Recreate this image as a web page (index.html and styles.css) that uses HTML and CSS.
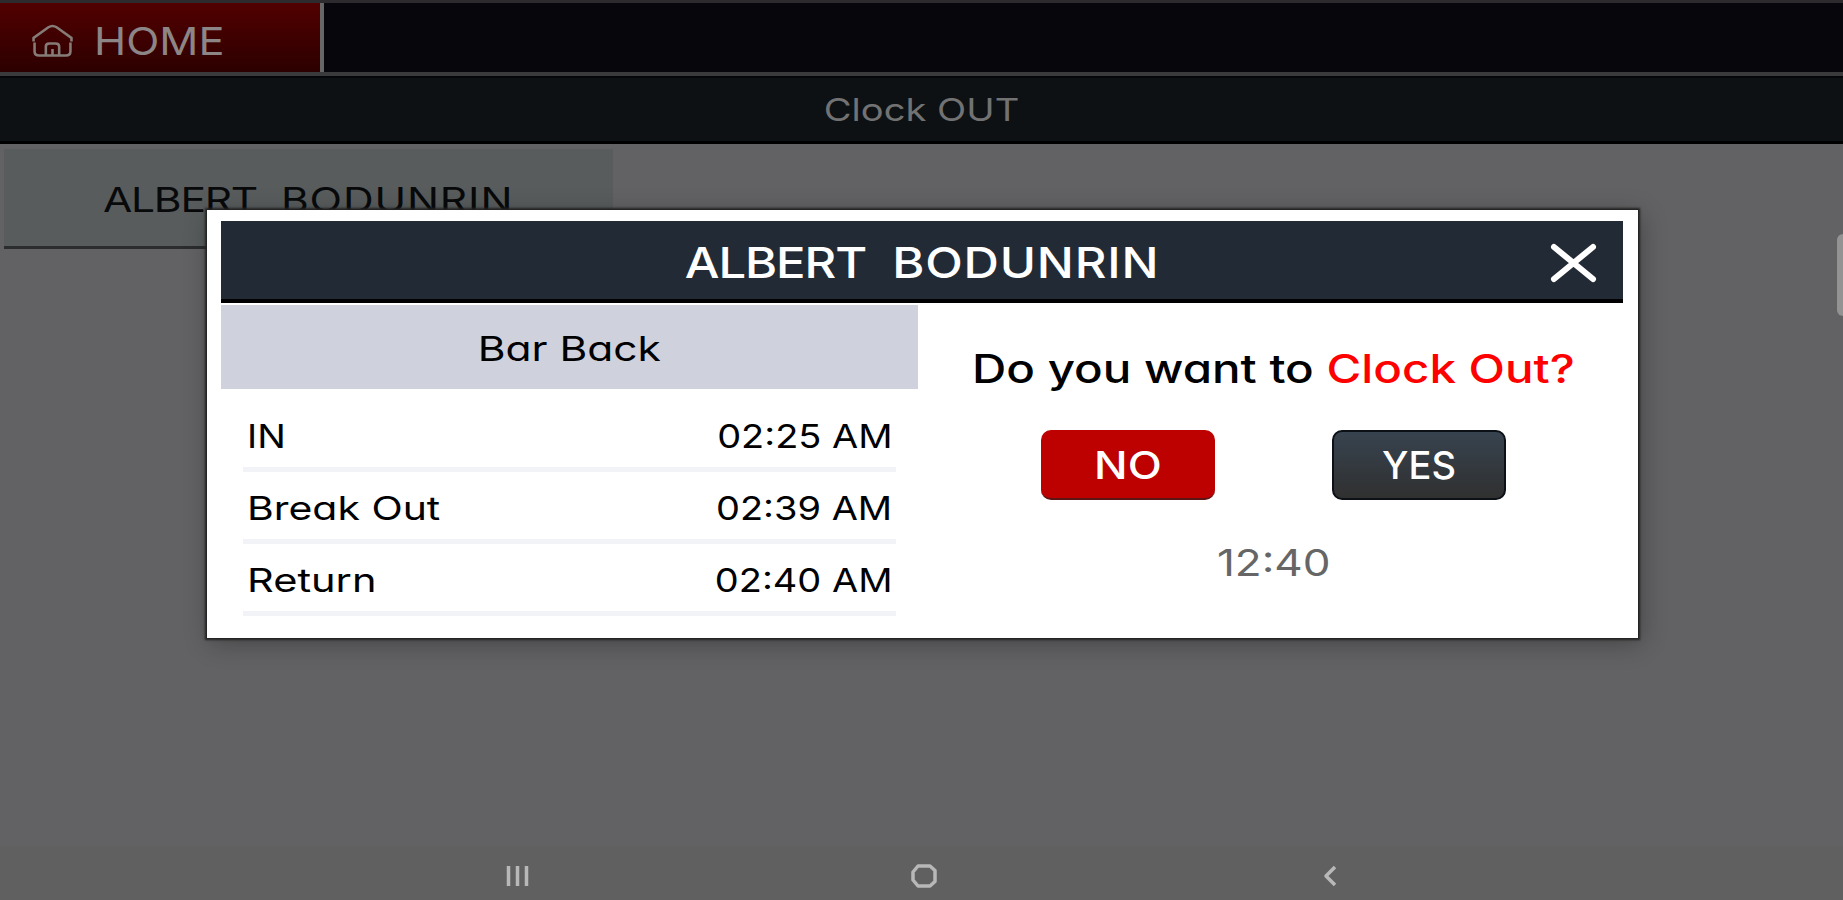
FILE: index.html
```html
<!DOCTYPE html>
<html lang="en">
<head>
    <meta charset="UTF-8">
    <meta name="viewport" content="width=device-width, initial-scale=1.0">
    <title>Clock OUT</title>
    <link rel="stylesheet" href="styles.css">
</head>
<body>
    <div class="screen">
        <header class="topbar">
            <a class="home-button">
                <svg class="home-icon" viewBox="0 0 40 33" preserveAspectRatio="none">
                    <path d="M1.5 17.500V14L16 3.2Q20 .6 24 3.2L38.500 14V17.500M2.500 18.500V27.500Q2.500 31.500 7 31.500H33Q37.500 31.500 37.500 27.500V18.500M13.500 31V22.500Q13.500 19.500 17 19.500H23Q26.500 19.500 26.500 22.500V31M20 25V31"/>
                </svg>
                <span class="text home-label">HOME</span>
            </a>
        </header>

        <div class="title-bar"><span class="text page-title">Clock OUT</span></div>

        <main class="employees">
            <div class="employee-card"><span class="text employee-name"><span class="first">ALBERT</span>&nbsp; <span class="last">BODUNRIN</span></span></div>
        </main>

        <nav class="android-nav">
            <svg class="nav-icon" viewBox="0 0 30 24">
                <path d="M5.500 2V22M14.500 2V22M23.500 2V22"/>
            </svg>
            <svg class="nav-icon" viewBox="0 0 30 24">
                <path d="M9 2H21L26 6.500V17.500L21 22H9L4 16V8Z"/>
            </svg>
            <svg class="nav-icon" viewBox="0 0 30 24">
                <path d="M20 3L11 12L20 21"/>
            </svg>
        </nav>
    </div>

    <div class="edge-handle"></div>

    <!-- Clock out dialog -->
    <div class="modal">
        <div class="modal-header">
            <span class="text modal-title"><span class="first">ALBERT</span>&nbsp; <span class="last">BODUNRIN</span></span>
            <svg class="close-icon" viewBox="0 0 50 42">
                <path d="M5 5L44 37M44 5L5 37"/>
            </svg>
        </div>
        <div class="modal-body">
            <section class="shift">
                <div class="job"><span class="text job-name">Bar Back</span></div>
                <ul class="punches">
                    <li><span class="text label in">IN</span><span class="text time">02:25 AM</span></li>
                    <li><span class="text label break">Break Out</span><span class="text time">02:39 AM</span></li>
                    <li><span class="text label return">Return</span><span class="text time">02:40 AM</span></li>
                </ul>
            </section>
            <section class="confirm">
                <p class="text question">Do you want to <span class="red">Clock Out?</span></p>
                <div class="buttons">
                    <button class="btn btn-no"><span class="text no">NO</span></button>
                    <button class="btn btn-yes"><span class="text yes">YES</span></button>
                </div>
                <span class="text clock">12:40</span>
            </section>
        </div>
    </div>
</body>
</html>
```
FILE: styles.css
```css
* {
    box-sizing: border-box;
}

body {
    margin: 0;
    font-family: Inter, "Liberation Sans", sans-serif;
    font-feature-settings: "cv11";
    background-color: #626264;
    height: 900px;
    overflow: hidden;
    position: relative;
}

.text {
    display: inline-block;
    white-space: nowrap;
    line-height: 1;
}

.first {
    letter-spacing: -1px;
}

.last {
    letter-spacing: 0.7px;
}

.screen {
    display: flex;
    flex-direction: column;
    height: 900px;
}

.topbar {
    display: flex;
    height: 76px;
    background-color: #07060c;
    border-top: 3px solid #2d2b2e;
    border-bottom: 4px solid #3a393c;
}

.home-button {
    display: flex;
    align-items: center;
    width: 324px;
    padding-left: 32px;
    padding-top: 6px;
    border-right: 4px solid #666;
    background: linear-gradient(#520000, #2c0000);
    color: #8c8686;
}

.home-icon {
    width: 41px;
    height: 33px;
    margin-right: 21px;
    fill: none;
    stroke: #857c78;
    stroke-width: 2.5;
}

.home-label {
    font-size: 38px;
    transform: scaleX(1.14);
    transform-origin: left;
}

.title-bar {
    display: flex;
    align-items: center;
    justify-content: center;
    height: 68px;
    background-color: #0d1113;
    border-top: 2px solid #04060a;
    border-bottom: 3px solid #000;
    color: #727273;
}

.page-title {
    font-size: 31px;
    transform: scaleX(1.23);
}

.employees {
    flex: 1;
    padding: 5px 4px;
}

.employee-card {
    display: flex;
    align-items: center;
    justify-content: center;
    width: 609px;
    height: 100px;
    padding-top: 5px;
    background-color: #585c5c;
    border-bottom: 3px solid #2a2c2d;
    color: #08090a;
}

.employee-name {
    font-size: 34px;
    transform: scaleX(1.25);
}

.android-nav {
    display: flex;
    align-items: center;
    justify-content: center;
    gap: 376px;
    height: 54px;
    padding: 5px 0 0 5px;
    background-color: #606060;
}

.nav-icon {
    width: 30px;
    height: 24px;
    fill: none;
    stroke: #b8b8b8;
    stroke-width: 3.5;
    stroke-linejoin: round;
}

.edge-handle {
    position: absolute;
    right: 0;
    top: 234px;
    width: 6px;
    height: 82px;
    background-color: #939393;
    border-radius: 6px 0 0 6px;
}

.modal {
    position: absolute;
    left: 207px;
    top: 210px;
    width: 1431px;
    height: 428px;
    padding: 11px 15px 0 14px;
    background-color: #fff;
    box-shadow: 0 0 2px 2px #222, 3px 5px 24px rgba(0, 0, 0, 0.3);
}

.modal-header {
    position: relative;
    display: flex;
    align-items: center;
    justify-content: center;
    height: 82px;
    padding-top: 5px;
    background-color: #222b35;
    border-bottom: 4px solid #000;
    color: #fff;
}

.modal-title {
    font-size: 43px;
    font-weight: 500;
    transform: scaleX(1.14);
}

.close-icon {
    position: absolute;
    right: 24px;
    top: 21px;
    width: 50px;
    height: 42px;
    stroke: #fff;
    stroke-width: 6;
    stroke-linecap: round;
}

.modal-body {
    display: flex;
    padding-top: 2px;
}

.shift {
    width: 697px;
}

.job {
    display: flex;
    align-items: center;
    justify-content: center;
    height: 84px;
    padding-top: 4px;
    background-color: #cfd1dd;
}

.job-name {
    font-size: 34px;
    transform: scaleX(1.25);
}

.punches {
    list-style: none;
    margin: 0;
    padding: 11px 22px 0;
}

.punches li {
    display: flex;
    align-items: center;
    justify-content: space-between;
    height: 72px;
    padding: 5px 4px 0;
    border-bottom: 5px solid #f2f3f7;
}

.label {
    font-size: 33px;
    transform-origin: left;
}

.in {
    transform: scaleX(1.15);
}

.break {
    transform: scaleX(1.24);
}

.return {
    transform: scaleX(1.26);
}

.time {
    font-size: 33px;
    transform: scaleX(1.15);
    transform-origin: right;
}

.confirm {
    flex: 1;
    display: flex;
    flex-direction: column;
    align-items: center;
    padding-left: 6px;
}

.question {
    margin: 44px 0 0;
    font-size: 39px;
    font-weight: 500;
    transform: scaleX(1.218);
}

.red {
    color: #fe0000;
}

.buttons {
    display: flex;
    gap: 117px;
    margin-top: 42px;
}

.btn {
    width: 174px;
    height: 70px;
    padding: 0;
    border: none;
    border-radius: 10px;
    font: inherit;
    font-weight: 500;
    color: #fff;
}

.btn-no {
    background-color: #bd0000;
    border-bottom: 2px solid #5c1414;
}

.btn-yes {
    background: linear-gradient(#37434f, #303030);
    border: 2px solid #0c1118;
}

.no,
.yes {
    font-size: 38px;
}

.no {
    padding-top: 2px;
    transform: scaleX(1.17);
}

.clock {
    margin-top: 44px;
    font-size: 37px;
    color: #666;
    transform: scaleX(1.19);
}
```
